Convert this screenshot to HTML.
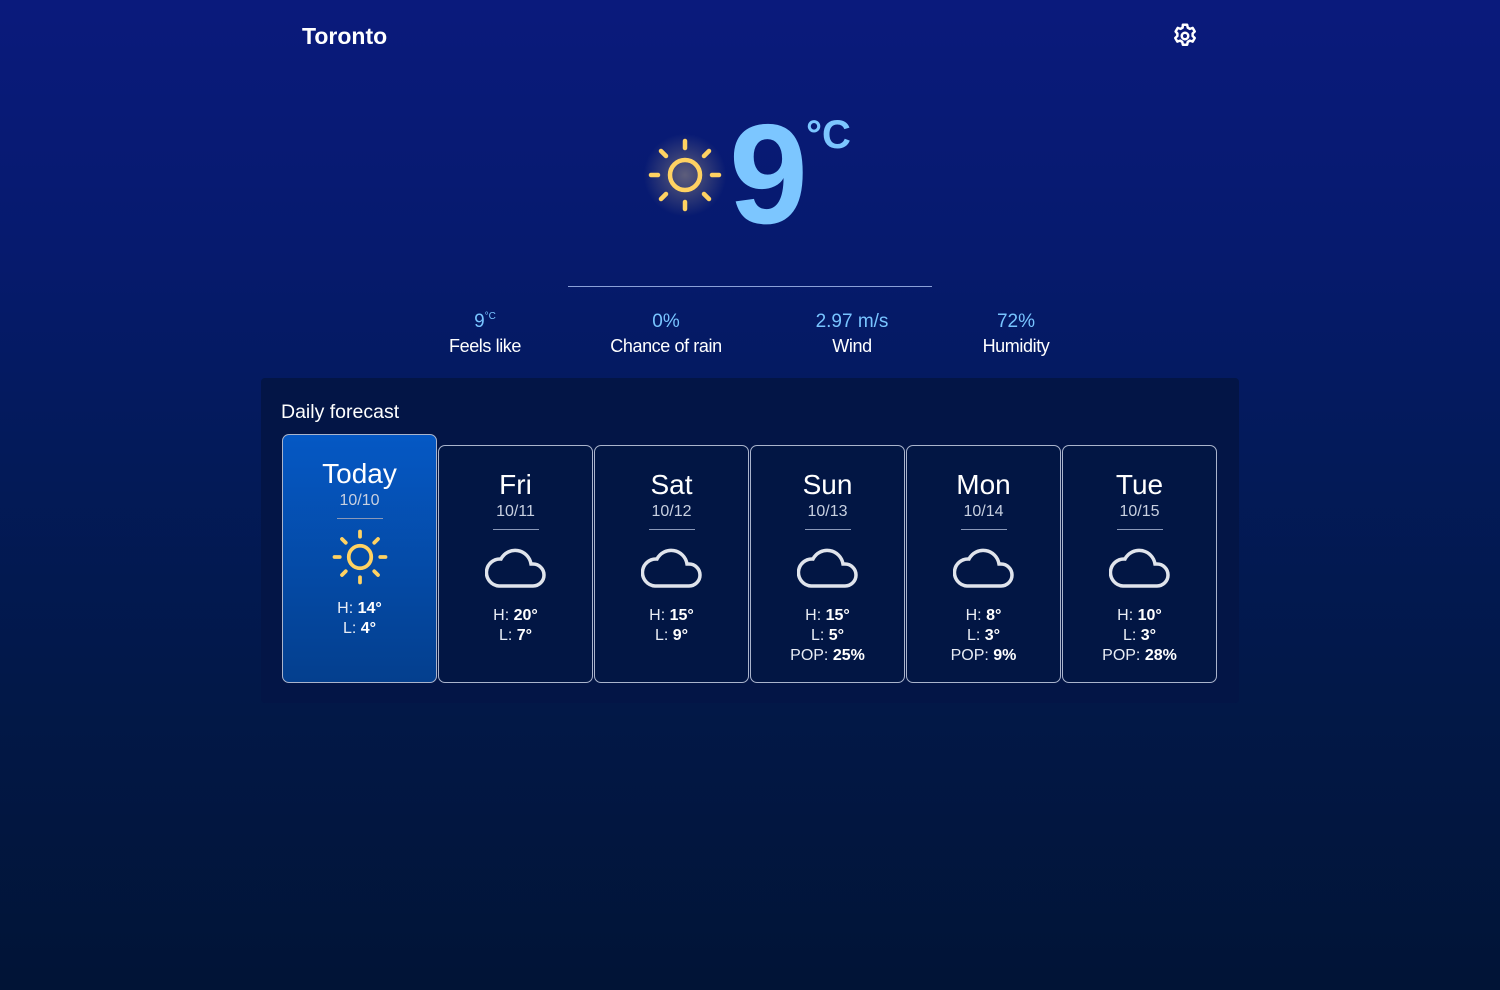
<!DOCTYPE html>
<html><head><meta charset="utf-8"><style>
*{margin:0;padding:0;box-sizing:border-box}
body{width:1500px;height:990px;overflow:hidden;font-family:"Liberation Sans",sans-serif;color:#fff;
background:linear-gradient(180deg,#0a1a7c 0%,#061a6e 25%,#031a5a 45%,#021848 70%,#011436 100%);position:relative}
.abs{position:absolute}
.city{left:302px;top:23px;font-size:23px;font-weight:bold}
.big{left:729px;top:104px;font-size:142px;font-weight:bold;color:#7cc6ff;line-height:1;letter-spacing:-2px}
.deg{left:806px;top:113px;font-size:40px;font-weight:bold;color:#7cc6ff}
.line{left:568px;top:286px;width:364px;height:1px;background:#8aa0d8}
.st{top:310px;text-align:center;width:200px;font-size:18px;color:#fff;line-height:24px;letter-spacing:-0.4px}
.st b{display:block;font-weight:normal;color:#78c4ff;font-size:19px;letter-spacing:0}
.st sup{font-size:10px;line-height:0;vertical-align:8px}
.panel{left:261px;top:378px;width:978px;height:325px;background:#031546;border-radius:4px}
.pt{left:281px;top:401px;font-size:19.5px}
.card{top:445px;width:155px;height:238px;border:1.5px solid #aab4cc;border-radius:7px;background:#021644;text-align:center}
.card .d{font-size:28px;margin-top:22px;line-height:34px}
.card .dt{font-size:16px;color:#c8d0e0;line-height:20px}
.card .hr{width:46px;height:1px;background:#8a98b8;margin:7px auto 12px}
.card svg{display:block;margin:0 auto 16px}
.card .t{font-size:16px;line-height:20px;color:#e8ecf4}
.card .t b{color:#fff}
.today{top:434px;height:249px;background:linear-gradient(180deg,#0558c4,#043f8e)}
.today .hr{margin-bottom:8px}
.today svg{margin-bottom:12px}
</style></head><body>
<div class="abs city">Toronto</div>
<svg class="abs" style="left:1170px;top:21px" width="30" height="30" viewBox="0 0 24 24" fill="none" stroke="#fff" stroke-width="2" stroke-linejoin="round"><path d="M10.3 3h3.4l.5 2.3 1.7 1 2.2-.8 1.7 2.9-1.7 1.6v2l1.7 1.6-1.7 2.9-2.2-.8-1.7 1-.5 2.3h-3.4l-.5-2.3-1.7-1-2.2.8-1.7-2.9 1.7-1.6v-2L4.5 8.4l1.7-2.9 2.2.8 1.7-1z"/><circle cx="12" cy="12" r="2.6"/></svg>
<div class="abs" style="left:640px;top:130px;width:90px;height:90px;border-radius:50%;background:radial-gradient(circle,rgba(255,220,140,.35),rgba(255,220,140,0) 65%)"></div>
<svg class="abs" style="left:645px;top:135px" width="80" height="80" viewBox="0 0 80 80" fill="none" stroke="#ffd262" stroke-width="4.5" stroke-linecap="round"><circle cx="40" cy="40" r="15"/><path d="M40 6v7M40 67v7M6 40h7M67 40h7M16 16l5 5M59 59l5 5M64 16l-5 5M21 59l-5 5"/></svg>
<div class="abs big">9</div>
<div class="abs deg">°C</div>
<div class="abs line"></div>
<div class="abs st" style="left:385px"><b>9<sup>°C</sup></b>Feels like</div>
<div class="abs st" style="left:566px"><b>0%</b>Chance of rain</div>
<div class="abs st" style="left:752px"><b>2.97 m/s</b>Wind</div>
<div class="abs st" style="left:916px"><b>72%</b>Humidity</div>
<div class="abs panel"></div>
<div class="abs pt">Daily forecast</div>

<div class="abs card today" style="left:282px"><div class="d">Today</div><div class="dt">10/10</div><div class="hr"></div>
<svg width="60" height="60" viewBox="0 0 80 80" fill="none" stroke="#ffd262" stroke-width="5" stroke-linecap="round"><circle cx="40" cy="40" r="15"/><path d="M40 6v7M40 67v7M6 40h7M67 40h7M16 16l5 5M59 59l5 5M64 16l-5 5M21 59l-5 5"/></svg>
<div class="t">H: <b>14°</b></div><div class="t">L: <b>4°</b></div></div>

<div class="abs card" style="left:438px"><div class="d">Fri</div><div class="dt">10/11</div><div class="hr"></div>
<svg width="62" height="48" viewBox="0 0 62 48" fill="none" stroke="#e0e4ec" stroke-width="3.5"><path d="M14 44h34a11 11 0 0 0 0-22h-2a16 16 0 0 0-30-5A13.5 13.5 0 0 0 14 44z"/></svg>
<div class="t">H: <b>20°</b></div><div class="t">L: <b>7°</b></div></div>

<div class="abs card" style="left:594px"><div class="d">Sat</div><div class="dt">10/12</div><div class="hr"></div>
<svg width="62" height="48" viewBox="0 0 62 48" fill="none" stroke="#e0e4ec" stroke-width="3.5"><path d="M14 44h34a11 11 0 0 0 0-22h-2a16 16 0 0 0-30-5A13.5 13.5 0 0 0 14 44z"/></svg>
<div class="t">H: <b>15°</b></div><div class="t">L: <b>9°</b></div></div>

<div class="abs card" style="left:750px"><div class="d">Sun</div><div class="dt">10/13</div><div class="hr"></div>
<svg width="62" height="48" viewBox="0 0 62 48" fill="none" stroke="#e0e4ec" stroke-width="3.5"><path d="M14 44h34a11 11 0 0 0 0-22h-2a16 16 0 0 0-30-5A13.5 13.5 0 0 0 14 44z"/></svg>
<div class="t">H: <b>15°</b></div><div class="t">L: <b>5°</b></div><div class="t">POP: <b>25%</b></div></div>

<div class="abs card" style="left:906px"><div class="d">Mon</div><div class="dt">10/14</div><div class="hr"></div>
<svg width="62" height="48" viewBox="0 0 62 48" fill="none" stroke="#e0e4ec" stroke-width="3.5"><path d="M14 44h34a11 11 0 0 0 0-22h-2a16 16 0 0 0-30-5A13.5 13.5 0 0 0 14 44z"/></svg>
<div class="t">H: <b>8°</b></div><div class="t">L: <b>3°</b></div><div class="t">POP: <b>9%</b></div></div>

<div class="abs card" style="left:1062px"><div class="d">Tue</div><div class="dt">10/15</div><div class="hr"></div>
<svg width="62" height="48" viewBox="0 0 62 48" fill="none" stroke="#e0e4ec" stroke-width="3.5"><path d="M14 44h34a11 11 0 0 0 0-22h-2a16 16 0 0 0-30-5A13.5 13.5 0 0 0 14 44z"/></svg>
<div class="t">H: <b>10°</b></div><div class="t">L: <b>3°</b></div><div class="t">POP: <b>28%</b></div></div>
</body></html>
